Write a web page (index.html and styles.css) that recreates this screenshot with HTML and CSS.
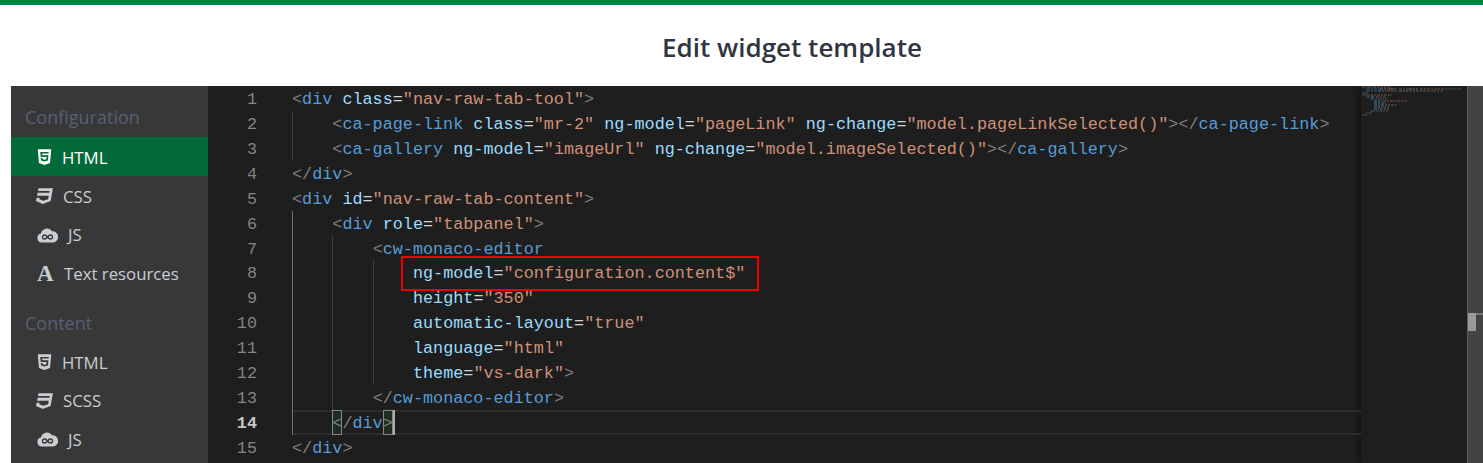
FILE: index.html
```html
<!DOCTYPE html>
<html lang="en">
<head>
<meta charset="utf-8">
<title>Edit widget template</title>
<link rel="stylesheet" href="styles.css">
</head>
<body>
<div class="topbar"></div>
<h1 class="title">Edit widget template</h1>
<div class="panel">
  <nav class="sidebar">
    <div class="section">Configuration</div>
    <a class="item active"><svg class="ic ic-html" viewBox="0 0 384 512"><path d="M0 32l34.9 395.8L191.5 480l157.6-52.2L384 32H0zm308.2 127.9H124.4l4.1 49.4h175.6l-13.6 148.4-97.9 27v.3h-1.1l-98.7-27.3-6-75.8h47.7L138 320l53.5 14.5 53.7-14.5 6-62.2H84.3L71.5 112.2h241.1l-4.4 47.7z"/></svg>HTML</a>
    <a class="item"><svg class="ic ic-css" viewBox="0 0 512 512"><path d="M480 32l-64 368-223.3 80L0 400l19.6-94.8h82l-8 40.6L210 390.2l134.1-44.4 18.8-97.1H29.5l16-82h333.7l10.5-52.7H56.3l16.3-82H480z"/></svg>CSS</a>
    <a class="item"><svg class="ic ic-js" viewBox="0 0 21 16"><path d="M5 15.5a4.5 4.5 0 0 1-1-8.9A6 6 0 0 1 15 4.3a5.6 5.6 0 0 1 1 11.2z"/><path class="inf" d="M10.5 10c-1-1.4-1.9-2-3-2a2 2 0 0 0 0 4c1.1 0 2-.6 3-2s1.9-2 3-2a2 2 0 0 1 0 4c-1.1 0-2-.6-3-2z"/></svg>JS</a>
    <a class="item"><span class="ic-a">A</span>Text resources</a>
    <div class="section second">Content</div>
    <a class="item"><svg class="ic ic-html" viewBox="0 0 384 512"><path d="M0 32l34.9 395.8L191.5 480l157.6-52.2L384 32H0zm308.2 127.9H124.4l4.1 49.4h175.6l-13.6 148.4-97.9 27v.3h-1.1l-98.7-27.3-6-75.8h47.7L138 320l53.5 14.5 53.7-14.5 6-62.2H84.3L71.5 112.2h241.1l-4.4 47.7z"/></svg>HTML</a>
    <a class="item"><svg class="ic ic-css" viewBox="0 0 512 512"><path d="M480 32l-64 368-223.3 80L0 400l19.6-94.8h82l-8 40.6L210 390.2l134.1-44.4 18.8-97.1H29.5l16-82h333.7l10.5-52.7H56.3l16.3-82H480z"/></svg>SCSS</a>
    <a class="item"><svg class="ic ic-js" viewBox="0 0 21 16"><path d="M5 15.5a4.5 4.5 0 0 1-1-8.9A6 6 0 0 1 15 4.3a5.6 5.6 0 0 1 1 11.2z"/><path class="inf" d="M10.5 10c-1-1.4-1.9-2-3-2a2 2 0 0 0 0 4c1.1 0 2-.6 3-2s1.9-2 3-2a2 2 0 0 1 0 4c-1.1 0-2-.6-3-2z"/></svg>JS</a>
  </nav>
  <div class="editor">
    <div class="gutter">
      <div class="num">1</div><div class="num">2</div><div class="num">3</div><div class="num">4</div><div class="num">5</div><div class="num">6</div><div class="num">7</div><div class="num">8</div><div class="num">9</div><div class="num">10</div><div class="num">11</div><div class="num">12</div><div class="num">13</div><div class="num cur-num">14</div><div class="num">15</div>
    </div>
    <div class="code">
      <div class="line"><i>&lt;</i><b>div</b> <u>class</u><em>=</em><s>"nav-raw-tab-tool"</s><i>&gt;</i></div>
      <div class="line"><span class="ind"></span><i>&lt;</i><b>ca-page-link</b> <u>class</u><em>=</em><s>"mr-2"</s> <u>ng-model</u><em>=</em><s>"pageLink"</s> <u>ng-change</u><em>=</em><s>"model.pageLinkSelected()"</s><i>&gt;&lt;/</i><b>ca-page-link</b><i>&gt;</i></div>
      <div class="line"><span class="ind"></span><i>&lt;</i><b>ca-gallery</b> <u>ng-model</u><em>=</em><s>"imageUrl"</s> <u>ng-change</u><em>=</em><s>"model.imageSelected()"</s><i>&gt;&lt;/</i><b>ca-gallery</b><i>&gt;</i></div>
      <div class="line"><i>&lt;/</i><b>div</b><i>&gt;</i></div>
      <div class="line"><i>&lt;</i><b>div</b> <u>id</u><em>=</em><s>"nav-raw-tab-content"</s><i>&gt;</i></div>
      <div class="line"><span class="ind on"></span><i>&lt;</i><b>div</b> <u>role</u><em>=</em><s>"tabpanel"</s><i>&gt;</i></div>
      <div class="line"><span class="ind on"></span><span class="ind"></span><i>&lt;</i><b>cw-monaco-editor</b></div>
      <div class="line"><span class="ind on"></span><span class="ind"></span><span class="ind"></span><u>ng-model</u><em>=</em><s>"configuration.content$"</s></div>
      <div class="line"><span class="ind on"></span><span class="ind"></span><span class="ind"></span><u>height</u><em>=</em><s>"350"</s></div>
      <div class="line"><span class="ind on"></span><span class="ind"></span><span class="ind"></span><u>automatic-layout</u><em>=</em><s>"true"</s></div>
      <div class="line"><span class="ind on"></span><span class="ind"></span><span class="ind"></span><u>language</u><em>=</em><s>"html"</s></div>
      <div class="line"><span class="ind on"></span><span class="ind"></span><span class="ind"></span><u>theme</u><em>=</em><s>"vs-dark"</s><i>&gt;</i></div>
      <div class="line"><span class="ind on"></span><span class="ind"></span><i>&lt;/</i><b>cw-monaco-editor</b><i>&gt;</i></div>
      <div class="line cur"><span class="ind on"></span><i class="match">&lt;</i><i>/</i><b>div</b><i class="match">&gt;</i><span class="caret"></span></div>
      <div class="line"><i>&lt;/</i><b>div</b><i>&gt;</i></div>
      <div class="redbox"></div>
    </div>
    <div class="minimap">
      <svg class="mini" viewBox="0 0 106 30" width="106" height="30">
        <path class="m-d" d="M1 1h1M30 1h1M5 3h1M85 3h4M100 3h1M5 5h1M69 5h3M81 5h1M1 7h2M6 7h1M1 9h1M30 9h1M5 11h1M24 11h1M9 13h1M9 25h2M5 27h3M1 29h2"/>
        <path class="m-t" d="M2 1h3M6 3h13M89 3h11M6 5h10M72 5h9M3 7h3M2 9h3M6 11h3M10 13h16M11 25h16M8 27h3M3 29h3"/>
        <path class="m-a" d="M6 1h5M19 3h6M28 3h8M48 3h9M17 5h8M38 5h9M6 9h2M10 11h4M13 15h8M13 17h6M13 19h16M13 21h8M13 23h5"/>
        <path class="m-s" d="M12 1h18M26 3h6M38 3h10M59 3h26M26 5h10M48 5h21M9 9h21M15 11h9M22 15h24M20 17h5M30 19h6M22 21h6M19 23h9"/>
      </svg>
    </div>
    <div class="scrollbar"><div class="overview"></div><div class="slider"></div></div>
  </div>
</div>
</body>
</html>
```
FILE: styles.css
```css
html, body {
  margin: 0;
  height: 100%;
  overflow: hidden;
  background: #fff;
}
body {
  display: flex;
  flex-direction: column;
  font-family: "Open Sans", "Noto Sans", sans-serif;
}
.topbar {
  height: 5px;
  flex: none;
  background: #008242;
}
.title {
  margin: 0;
  height: 81px;
  flex: none;
  box-sizing: border-box;
  padding: 25px 0 0 101px;
  text-align: center;
  font-size: 26px;
  line-height: 34px;
  font-weight: 600;
  color: #2f3542;
}
.panel {
  flex: 1;
  min-height: 0;
  margin-left: 11px;
  display: flex;
  overflow: hidden;
}
.sidebar {
  width: 197px;
  flex: none;
  background: #383838;
  padding-top: 19px;
  box-sizing: border-box;
  overflow: hidden;
}
.section {
  height: 32px;
  padding-left: 14px;
  font-size: 18px;
  line-height: 25px;
  color: #566074;
}
.section.second {
  margin-top: 19px;
  height: 31px;
}
.item {
  height: 38.7px;
  box-sizing: border-box;
  padding: 2px 0 0 26px;
  display: flex;
  align-items: center;
  gap: 10px;
  font-size: 16.8px;
  color: #c9ced3;
  white-space: nowrap;
}
.item.active {
  background: #026a38;
  color: #fff;
}
.ic {
  flex: none;
  fill: currentColor;
}
.ic-html { width: 15px; height: 18px; }
.ic-css { width: 18px; height: 18px; margin-right: -1px; margin-left: -1px; }
.ic-js { width: 21px; height: 16px; }
.ic-js .inf {
  fill: none;
  stroke: #383838;
  stroke-width: 1.3;
}
.ic-a {
  width: 17px;
  font-family: "Liberation Serif", serif;
  font-weight: 700;
  font-size: 23px;
  line-height: 1;
}
.editor {
  flex: 1;
  min-width: 0;
  display: flex;
  background: #1e1e1e;
  font-family: "Liberation Mono", monospace;
  font-size: 16.8px;
  overflow: hidden;
}
.gutter {
  width: 84px;
  flex: none;
}
.num {
  height: 24.93px;
  line-height: 27.5px;
  padding-right: 35px;
  text-align: right;
  color: #858585;
}
.cur-num {
  color: #c6c6c6;
  font-weight: 700;
}
.code {
  flex: 1;
  min-width: 0;
  position: relative;
}
.line {
  height: 24.93px;
  line-height: 27.5px;
  white-space: pre;
}
.line.cur {
  box-shadow: inset 0 2px #2c2c2c, inset 0 -2px #2c2c2c;
}
.line i, .line b, .line u, .line em, .line s {
  font-style: normal;
  font-weight: 400;
  text-decoration: none;
}
.line i { color: #808080; }
.line b { color: #569cd6; }
.line u { color: #9cdcfe; }
.line em { color: #d4d4d4; }
.line s { color: #ce9178; }
.ind {
  display: inline-block;
  vertical-align: top;
  width: 40.32px;
  height: 24.93px;
  box-sizing: border-box;
  border-left: 1px solid #404040;
}
.ind.on {
  border-left-color: #707070;
}
.line .match {
  display: inline-block;
  vertical-align: top;
  height: 24.93px;
  background: #1c2e1f;
  box-shadow: inset 0 0 0 1px #888;
}
.caret {
  display: inline-block;
  vertical-align: top;
  width: 2px;
  height: 24.93px;
  background: #aeafad;
}
.redbox {
  position: absolute;
  left: 109px;
  top: 170px;
  width: 358px;
  height: 35px;
  box-sizing: border-box;
  border: 2px solid #ee0000;
}
.minimap {
  width: 106px;
  flex: none;
  box-shadow: -4px 0 5px -2px #111;
}
.mini {
  display: block;
  fill: none;
  stroke-width: 1.2;
  stroke-dasharray: 3 1 2 1;
  opacity: .8;
}
.m-d { stroke: #555; }
.m-t { stroke: #3f6a8e; }
.m-a { stroke: #66899e; }
.m-s { stroke: #87644f; }
.scrollbar {
  width: 16px;
  flex: none;
  position: relative;
  background: #434343;
  border-left: 1px solid #5c5c5c;
  box-sizing: border-box;
}
.overview {
  position: absolute;
  left: 0;
  right: 0;
  top: 227px;
  height: 2px;
  background: #777;
}
.slider {
  position: absolute;
  left: 0;
  top: 227px;
  width: 8px;
  height: 18px;
  background: #9a9a9a;
}
```
